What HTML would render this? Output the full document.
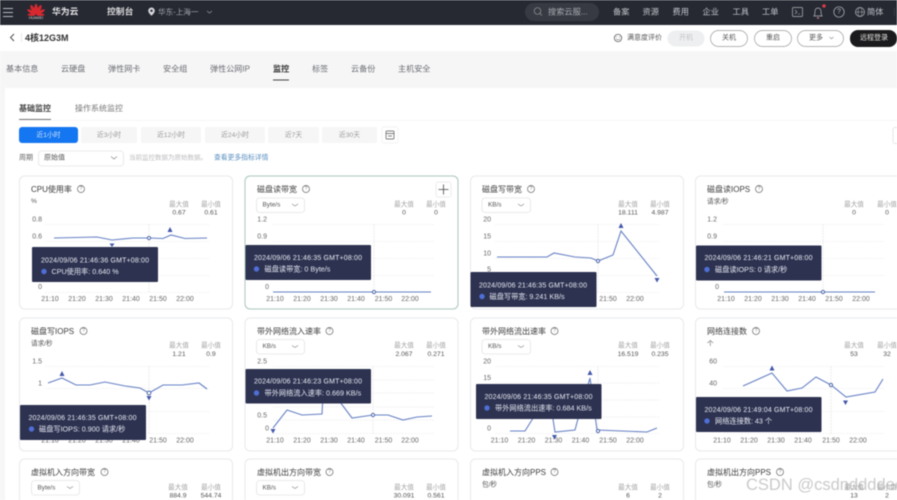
<!DOCTYPE html>
<html lang="zh-CN">
<head>
<meta charset="utf-8">
<title>4核12G3M 监控</title>
<style>
html,body{margin:0;padding:0;background:#fff;width:897px;height:500px;overflow:hidden}
svg{display:block;filter:blur(.5px)}
text{font-family:"Liberation Sans","Noto Sans CJK SC",sans-serif;dominant-baseline:central;white-space:pre}
.m{font-size:8.1px;fill:#6b6d72}
.s{font-size:8px;fill:#777}
.c{fill:#fff;stroke:#e8e9eb;stroke-width:1}
.ti{font-size:8px;fill:#3c3c3c}
.u{font-size:6.6px;fill:#555}
.l{font-size:6.6px;fill:#a4a4a4;text-anchor:middle}
.v{font-size:6.8px;fill:#555;text-anchor:middle}
.y{font-size:7px;fill:#666;text-anchor:end}
.x{font-size:7px;fill:#666;text-anchor:middle}
.g{stroke:#efefef;stroke-width:.8;stroke-dasharray:2 1;fill:none}
.vl{stroke:#e6e6e6;stroke-width:.7;stroke-dasharray:2 1;fill:none}
.p{fill:none;stroke:#6680c4;stroke-width:1.1}
.d{fill:#fff;stroke:#4f68aa;stroke-width:1}
.k{fill:#4257ab}
.tb{fill:#2d3250}
.t1{font-size:7px;fill:#eceef5}
.t2{font-size:7.2px;fill:#e6e8f1}
.dot{fill:#4f6fd6}
.h{fill:none;stroke:#666;stroke-width:.7}
.sel{fill:#fff;stroke:#e4e4e4;stroke-width:.8}
.st{font-size:6.4px;fill:#555}
.ch{fill:none;stroke:#888;stroke-width:.7}
.nav{font-size:8.2px;fill:#c2c4c9}
.b{fill:#fff;stroke:#9a9a9a;stroke-width:.7}
.bt{font-size:7px;fill:#555;text-anchor:middle}
.r{fill:#f6f6f7}
.rt{font-size:6.8px;fill:#999;text-anchor:middle}
</style>
</head>
<body>
<svg width="897" height="500" viewBox="0 0 897 500" xmlns="http://www.w3.org/2000/svg">
<rect width="897" height="500" fill="#fff"/>
<!-- top bar -->
<rect width="897" height="25" fill="#262932"/>
<path d="M3 8.500h10M3 12.500h10M3 16.500h10" stroke="#b8bac0" stroke-width="1"/>
<g fill="#d8282f">
<ellipse cx="36" cy="9" rx="1.700" ry="5.200"/>
<ellipse cx="36" cy="9" rx="1.700" ry="5.200" transform="rotate(-28 36 15)"/>
<ellipse cx="36" cy="9" rx="1.700" ry="5.200" transform="rotate(28 36 15)"/>
<ellipse cx="36" cy="9.500" rx="1.500" ry="4.800" transform="rotate(-58 36 15)"/>
<ellipse cx="36" cy="9.500" rx="1.500" ry="4.800" transform="rotate(58 36 15)"/>
<ellipse cx="36" cy="10.500" rx="1.200" ry="4" transform="rotate(-88 36 15)"/>
<ellipse cx="36" cy="10.500" rx="1.200" ry="4" transform="rotate(88 36 15)"/>
</g>
<text x="36" y="18" text-anchor="middle" style="font-size:3.600px;fill:#ddd">HUAWEI</text>
<text x="52" y="11.500" style="font-size:8.800px;fill:#e6e6e8;font-weight:bold">华为云</text>
<text x="107" y="11.500" style="font-size:8.800px;fill:#d8d9dc;font-weight:bold">控制台</text>
<path d="M151.500 7.500a3.300 3.300 0 0 1 3.300 3.300c0 2.200-3.300 5-3.300 5s-3.300-2.800-3.300-5a3.300 3.300 0 0 1 3.300-3.300z" fill="#d5d6da"/>
<circle cx="151.500" cy="10.800" r="1.200" fill="#262932"/>
<text x="158" y="12" class="nav" style="font-size:7.600px;fill:#a6a8ae">华东-上海一</text>
<path d="M207 11l2.500 2 2.500-2" fill="none" stroke="#999" stroke-width=".7"/>
<rect x="525" y="3" width="74" height="18" rx="9" fill="#373a43"/>
<circle cx="537.500" cy="11" r="3.300" fill="none" stroke="#999" stroke-width=".7"/><path d="M540 13.500l2 2" stroke="#999" stroke-width=".7"/>
<text x="548" y="12" style="font-size:8.200px;fill:#a9abb1">搜索云服...</text>
<text x="613" y="12" class="nav">备案</text>
<text x="642.500" y="12" class="nav">资源</text>
<text x="672.500" y="12" class="nav">费用</text>
<text x="702.500" y="12" class="nav">企业</text>
<text x="732.500" y="12" class="nav">工具</text>
<text x="762" y="12" class="nav">工单</text>
<rect x="792.500" y="7.500" width="10" height="9" rx="1" fill="none" stroke="#b5b7bc" stroke-width=".7"/>
<path d="M795 10l2 2-2 2M798 14h2" fill="none" stroke="#b5b7bc" stroke-width=".6"/>
<path d="M814 16c1-1 1-3 1-5a3 3 0 0 1 6 0c0 2 0 4 1 5zM817 18h2" fill="none" stroke="#b5b7bc" stroke-width=".7"/>
<circle cx="818" cy="18" r=".9" fill="#c78"/>
<circle cx="824" cy="6" r="1.700" fill="#e0394a"/>
<circle cx="839" cy="12" r="5.200" fill="none" stroke="#b5b7bc" stroke-width=".7"/>
<text x="839" y="12" text-anchor="middle" style="font-size:7px;fill:#b5b7bc">?</text>
<circle cx="860" cy="12" r="4.500" fill="none" stroke="#b5b7bc" stroke-width=".7"/>
<ellipse cx="860" cy="12" rx="2" ry="4.500" fill="none" stroke="#b5b7bc" stroke-width=".5"/>
<path d="M855.500 12h9" stroke="#b5b7bc" stroke-width=".5"/>
<text x="867" y="12" class="nav">简体</text>
<path d="M894.500 8v8" stroke="#44464e" stroke-width=".7"/>
<!-- sub header -->
<rect y="25" width="897" height="26" fill="#fff"/>
<path d="M14 34l-3.500 3.500 3.500 3.500" fill="none" stroke="#444" stroke-width=".9"/>
<path d="M21.500 33v9" stroke="#ddd" stroke-width=".7"/>
<text x="25" y="38" style="font-size:9px;font-weight:bold;fill:#333">4核12G3M</text>
<circle cx="618" cy="38" r="3.700" fill="none" stroke="#444" stroke-width=".7"/>
<path d="M616 39c.8 1 3.200 1 4 0M616 37h1M619 37h1" fill="none" stroke="#444" stroke-width=".6"/>
<text x="627" y="38" style="font-size:7px;fill:#555">满意度评价</text>
<rect x="667.500" y="30.500" width="37" height="16" rx="8" fill="#eeeff0"/>
<text x="686" y="38" class="bt" style="fill:#c4c4c6">开机</text>
<rect x="710.500" y="30.500" width="37" height="16" rx="8" class="b"/>
<text x="729" y="38" class="bt">关机</text>
<rect x="754.500" y="30.500" width="37" height="16" rx="8" class="b"/>
<text x="773" y="38" class="bt">重启</text>
<rect x="797.500" y="30.500" width="46" height="16" rx="8" class="b"/>
<text x="816" y="38" class="bt">更多</text>
<path d="M829.500 37l2 1.800 2-1.800" fill="none" stroke="#888" stroke-width=".6"/>
<rect x="850" y="30" width="47" height="17" rx="8" fill="#1b1b1d"/>
<text x="874" y="38" class="bt" style="fill:#e6e6e6">远程登录</text>
<!-- tabs band -->
<rect y="51" width="897" height="37" fill="#f6f6f7"/>
<rect y="88" width="5" height="412" fill="#f6f6f7"/>
<rect x="5" y="88" width="892" height="412" rx="4" fill="#fff"/>
<text x="6" y="69" class="m">基本信息</text>
<text x="61" y="69" class="m">云硬盘</text>
<text x="108" y="69" class="m">弹性网卡</text>
<text x="163" y="69" class="m">安全组</text>
<text x="210" y="69" class="m">弹性公网IP</text>
<text x="273" y="69" class="m" style="fill:#333;font-weight:bold">监控</text>
<rect x="273" y="79.500" width="16" height="1" fill="#444"/>
<text x="312" y="69" class="m">标签</text>
<text x="351" y="69" class="m">云备份</text>
<text x="398" y="69" class="m">主机安全</text>
<!-- sub tabs -->
<text x="19" y="108.500" class="s" style="fill:#444;font-weight:bold">基础监控</text>
<rect x="19" y="119" width="32" height=".8" fill="#555"/>
<text x="75" y="108.500" class="s">操作系统监控</text>
<rect x="19" y="120" width="878" height=".6" fill="#f2f2f3"/>
<!-- range -->
<rect x="19" y="127" width="59" height="16" rx="3" fill="#1476f0"/>
<text x="48.500" y="135.500" class="rt" style="fill:#cfe3ff">近1小时</text>
<rect x="81" y="127" width="56" height="16" rx="2" class="r"/><text x="109" y="135.500" class="rt">近3小时</text>
<rect x="141" y="127" width="60" height="16" rx="2" class="r"/><text x="171" y="135.500" class="rt">近12小时</text>
<rect x="205" y="127" width="60" height="16" rx="2" class="r"/><text x="235" y="135.500" class="rt">近24小时</text>
<rect x="268" y="127" width="51" height="16" rx="2" class="r"/><text x="293.500" y="135.500" class="rt">近7天</text>
<rect x="322" y="127" width="55" height="16" rx="2" class="r"/><text x="349.500" y="135.500" class="rt">近30天</text>
<rect x="382" y="127" width="16" height="16" rx="2" fill="#fff" stroke="#eee" stroke-width=".7"/>
<rect x="386" y="131" width="8" height="8" rx="1" fill="none" stroke="#555" stroke-width=".7"/>
<path d="M386 133.500h8M388 136h4" stroke="#555" stroke-width=".7"/>
<rect x="893" y="127.500" width="10" height="16" rx="2" fill="#fff" stroke="#ddd" stroke-width=".7"/>
<text x="19" y="158" style="font-size:7px;fill:#666">周期</text>
<rect x="38.500" y="151" width="85" height="15" rx="3" class="sel"/>
<text x="44" y="158" class="st" style="font-size:7px">原始值</text>
<path d="M111 156.500l3 2.500 3-2.500" class="ch"/>
<text x="129" y="158" style="font-size:6.500px;fill:#bcbcc0">当前监控数据为原始数据。</text>
<text x="214" y="158" style="font-size:6.800px;fill:#5a8fc0">查看更多指标详情</text>

<!-- watermark under cards' text -->
<!-- CARD 1 -->
<rect x="19.500" y="176" width="213" height="133" rx="5" class="c"/>
<text x="31" y="189.500" class="ti">CPU使用率</text>
<circle cx="81" cy="189" r="3.500" class="h"/><text x="81" y="189" text-anchor="middle" style="font-size:5px;fill:#777">?</text>
<text x="31" y="201.500" class="u">%</text>
<text x="179" y="205" class="l">最大值</text><text x="179" y="213" class="v">0.67</text>
<text x="211" y="205" class="l">最小值</text><text x="211" y="213" class="v">0.61</text>
<path d="M45 224.500h165M45 241.500h165M45 258.500h165M45 275.500h165M45 292.500h165" class="g"/>
<path d="M149 224v68" class="vl"/>
<text x="42" y="220" class="y">0.8</text><text x="42" y="237" class="y">0.6</text><text x="42" y="287.500" class="y">0</text>
<text x="50" y="299.500" class="x">21:10</text><text x="77" y="299.500" class="x">21:20</text><text x="104" y="299.500" class="x">21:30</text><text x="131" y="299.500" class="x">21:40</text><text x="158" y="299.500" class="x">21:50</text><text x="185" y="299.500" class="x">22:00</text>
<polyline class="p" points="54,238 97,237 112,240 133,238 149,238 163,238.500 171,235 185,238.500 207,238"/>
<circle cx="149" cy="238" r="1.600" class="d"/>
<path d="M109.500 243.500h5l-2.500 3.500z" class="k"/><path d="M167.500 232h5l-2.500-5z" class="k"/>
<rect x="32" y="247" width="126" height="35" rx="1" class="tb"/>
<text x="41" y="261" class="t1" textLength="108">2024/09/06 21:46:36 GMT+08:00</text>
<circle cx="44" cy="271.500" r="2.700" class="dot"/>
<text x="51.500" y="271.500" class="t2">CPU使用率: 0.640 %</text>

<!-- CARD 2 -->
<rect x="245" y="176" width="213" height="133" rx="5" fill="#fff" stroke="#a9c6bd" stroke-width="1"/>
<text x="257" y="189.500" class="ti">磁盘读带宽</text>
<circle cx="306" cy="189" r="3.500" class="h"/><text x="306" y="189" text-anchor="middle" style="font-size:5px;fill:#777">?</text>
<rect x="436" y="182" width="15" height="15" rx="2" fill="#fff" stroke="#e6e6e6" stroke-width=".7"/>
<path d="M443.500 184.500v10M438.500 189.500h10" stroke="#444" stroke-width=".8"/>
<rect x="256.500" y="198" width="48" height="14.500" rx="3" class="sel"/>
<text x="262.500" y="205" class="st">Byte/s</text><path d="M292 204l3 2 3-2" class="ch"/>
<text x="404" y="205" class="l">最大值</text><text x="404" y="213" class="v">0</text>
<text x="436" y="205" class="l">最小值</text><text x="436" y="213" class="v">0</text>
<path d="M273 224.500h162M273 241.500h162M273 258.500h162M273 275.500h162" class="g"/>
<path d="M374 224v68" class="vl"/>
<text x="267" y="220" class="y">1.2</text><text x="267" y="237" class="y">0.9</text><text x="269" y="287.500" class="y">0</text>
<text x="275" y="299.500" class="x">21:10</text><text x="302" y="299.500" class="x">21:20</text><text x="329" y="299.500" class="x">21:30</text><text x="356" y="299.500" class="x">21:40</text><text x="383.500" y="299.500" class="x">21:50</text><text x="410" y="299.500" class="x">22:00</text>
<polyline class="p" points="273,292 431,292"/>
<circle cx="374" cy="292" r="1.600" class="d"/>
<rect x="245.500" y="245" width="125.500" height="35" rx="1" class="tb"/>
<text x="254" y="258.500" class="t1" textLength="108">2024/09/06 21:46:35 GMT+08:00</text>
<circle cx="256.500" cy="269" r="2.700" class="dot"/>
<text x="264.500" y="269" class="t2">磁盘读带宽: 0 Byte/s</text>

<!-- CARD 3 -->
<rect x="470.500" y="176" width="213" height="133" rx="5" class="c"/>
<text x="482" y="189.500" class="ti">磁盘写带宽</text>
<circle cx="531" cy="189" r="3.500" class="h"/><text x="531" y="189" text-anchor="middle" style="font-size:5px;fill:#777">?</text>
<rect x="482" y="198" width="48.500" height="14.500" rx="3" class="sel"/>
<text x="488" y="205" class="st">KB/s</text><path d="M518 204l3 2 3-2" class="ch"/>
<text x="628" y="205" class="l">最大值</text><text x="628" y="213" class="v">18.111</text>
<text x="660" y="205" class="l">最小值</text><text x="660" y="213" class="v">4.987</text>
<path d="M495 224.500h165M495 241.500h165M495 258.500h165M495 275.500h165M495 292.500h165" class="g"/>
<path d="M598 224v68" class="vl"/>
<text x="491" y="220" class="y">20</text><text x="491" y="237" class="y">15</text><text x="491" y="254" class="y">10</text><text x="491" y="270" class="y">5</text>
<text x="608" y="299.500" class="x">21:50</text><text x="635" y="299.500" class="x">22:00</text>
<polyline class="p" points="497,257 547,257 554,253 575,257 591,258 598,261 613,255 621,231 657,276"/>
<circle cx="598" cy="261" r="1.600" class="d"/>
<path d="M618.500 228h5l-2.500-5z" class="k"/><path d="M654.500 278h5l-2.500 4.500z" class="k"/>
<rect x="470.500" y="272" width="126" height="35" rx="1" class="tb"/>
<text x="479" y="286" class="t1" textLength="108">2024/09/06 21:46:35 GMT+08:00</text>
<circle cx="482" cy="296.500" r="2.700" class="dot"/>
<text x="489.500" y="296.500" class="t2">磁盘写带宽: 9.241 KB/s</text>

<!-- CARD 4 -->
<rect x="695.500" y="176" width="215" height="133" rx="5" class="c"/>
<text x="707" y="189.500" class="ti">磁盘读IOPS</text>
<circle cx="759" cy="189" r="3.500" class="h"/><text x="759" y="189" text-anchor="middle" style="font-size:5px;fill:#777">?</text>
<text x="707" y="202" class="u">请求/秒</text>
<text x="854" y="205" class="l">最大值</text><text x="854" y="213" class="v">0</text>
<text x="887" y="205" class="l">最小值</text><text x="887" y="213" class="v">0</text>
<path d="M723 224.500h162M723 241.500h162M723 258.500h162M723 275.500h162" class="g"/>
<path d="M823 224v68" class="vl"/>
<text x="717" y="220" class="y">1.2</text><text x="717" y="237" class="y">0.9</text><text x="719" y="287.500" class="y">0</text>
<text x="726" y="299.500" class="x">21:10</text><text x="753" y="299.500" class="x">21:20</text><text x="780" y="299.500" class="x">21:30</text><text x="807" y="299.500" class="x">21:40</text><text x="834" y="299.500" class="x">21:50</text><text x="861" y="299.500" class="x">22:00</text>
<polyline class="p" points="724,292 875,292"/>
<circle cx="823" cy="292" r="1.600" class="d"/>
<rect x="696" y="245.500" width="125.500" height="35" rx="1" class="tb"/>
<text x="704.500" y="258.500" class="t1" textLength="108">2024/09/06 21:46:21 GMT+08:00</text>
<circle cx="707" cy="269.500" r="2.700" class="dot"/>
<text x="715" y="269.500" class="t2">磁盘读IOPS: 0 请求/秒</text>

<!-- CARD 5 -->
<rect x="19.500" y="318" width="213" height="133" rx="5" class="c"/>
<text x="31" y="331.500" class="ti">磁盘写IOPS</text>
<circle cx="83.500" cy="331" r="3.500" class="h"/><text x="83.500" y="331" text-anchor="middle" style="font-size:5px;fill:#777">?</text>
<text x="31" y="344" class="u">请求/秒</text>
<text x="179" y="346" class="l">最大值</text><text x="179" y="354.500" class="v">1.21</text>
<text x="211" y="346" class="l">最小值</text><text x="211" y="354.500" class="v">0.9</text>
<path d="M45 366.500h165M45 388.500h165M45 411.500h165M45 433.500h165" class="g"/>
<path d="M149 366v68" class="vl"/>
<text x="42" y="362" class="y">1.5</text><text x="42" y="384" class="y">1</text>
<text x="50" y="441" class="x">21:10</text><text x="77" y="441" class="x">21:20</text><text x="104" y="441" class="x">21:30</text><text x="131" y="441" class="x">21:40</text><text x="158" y="441" class="x">21:50</text><text x="185" y="441" class="x">22:00</text>
<polyline class="p" points="48,383 62,378 76,385 90,385 105,382 125,386 140,388 149,393 163,385 182,385 199,383 207,389"/>
<circle cx="149" cy="393" r="1.900" class="d"/>
<path d="M59.500 376h5l-2.500-5z" class="k"/><path d="M146.500 396h5l-2.500 4.500z" class="k"/>
<rect x="20" y="405" width="126" height="35" rx="1" class="tb"/>
<text x="28.500" y="418.500" class="t1" textLength="108">2024/09/06 21:46:35 GMT+08:00</text>
<circle cx="31.500" cy="429" r="2.700" class="dot"/>
<text x="39" y="429" class="t2">磁盘写IOPS: 0.900 请求/秒</text>

<!-- CARD 6 -->
<rect x="245" y="318" width="213" height="133" rx="5" class="c"/>
<text x="257" y="331.500" class="ti">带外网络流入速率</text>
<circle cx="329.500" cy="331" r="3.500" class="h"/><text x="329.500" y="331" text-anchor="middle" style="font-size:5px;fill:#777">?</text>
<rect x="256.500" y="339.500" width="48" height="14.500" rx="3" class="sel"/>
<text x="262.500" y="346.500" class="st">KB/s</text><path d="M292 345.500l3 2 3-2" class="ch"/>
<text x="404" y="346" class="l">最大值</text><text x="404" y="354.500" class="v">2.067</text>
<text x="436" y="346" class="l">最小值</text><text x="436" y="354.500" class="v">0.271</text>
<path d="M273 366.500h162M273 380h162M273 393h162M273 407h162M273 420h162M273 433.500h162" class="g"/>
<path d="M373 366v68" class="vl"/>
<text x="267" y="362" class="y">2.5</text><text x="267" y="416" class="y">0.5</text><text x="269" y="429" class="y">0</text>
<text x="275" y="441" class="x">21:10</text><text x="302" y="441" class="x">21:20</text><text x="329" y="441" class="x">21:30</text><text x="356" y="441" class="x">21:40</text><text x="383.500" y="441" class="x">21:50</text><text x="410" y="441" class="x">22:00</text>
<polyline class="p" points="273,428 287,410 302,415 322,414 323,395 340,402 352,418 373,415 388,415 403,420 417,417 432,416"/>
<circle cx="373" cy="415" r="1.600" class="d"/>
<path d="M270.500 429h5l-2.500 4.500z" class="k"/>
<rect x="245.500" y="369" width="125.500" height="34.500" rx="1" class="tb"/>
<text x="254" y="382" class="t1" textLength="108">2024/09/06 21:46:23 GMT+08:00</text>
<circle cx="256.500" cy="393" r="2.700" class="dot"/>
<text x="264.500" y="393" class="t2">带外网络流入速率: 0.669 KB/s</text>

<!-- CARD 7 -->
<rect x="470.500" y="318" width="213" height="133" rx="5" class="c"/>
<text x="482" y="331.500" class="ti">带外网络流出速率</text>
<circle cx="554.500" cy="331" r="3.500" class="h"/><text x="554.500" y="331" text-anchor="middle" style="font-size:5px;fill:#777">?</text>
<rect x="482" y="339.500" width="48.500" height="14.500" rx="3" class="sel"/>
<text x="488" y="346.500" class="st">KB/s</text><path d="M518 345.500l3 2 3-2" class="ch"/>
<text x="628" y="346" class="l">最大值</text><text x="628" y="354.500" class="v">16.519</text>
<text x="660" y="346" class="l">最小值</text><text x="660" y="354.500" class="v">0.235</text>
<path d="M495 366.500h165M495 383h165M495 400h165M495 417h165M495 433.500h165" class="g"/>
<path d="M598 366v68" class="vl"/>
<text x="491" y="362" class="y">20</text><text x="491" y="378.500" class="y">15</text><text x="491" y="429" class="y">0</text>
<text x="499.500" y="441" class="x">21:10</text><text x="526.500" y="441" class="x">21:20</text><text x="553.500" y="441" class="x">21:30</text><text x="580.500" y="441" class="x">21:40</text><text x="608" y="441" class="x">21:50</text><text x="635" y="441" class="x">22:00</text>
<polyline class="p" points="510,431 525,431 535,415 550,400 555,432 575,430 579,415 590,378 597,430 647,432 657,428"/>
<circle cx="598" cy="431" r="1.600" class="d"/>
<path d="M587.500 375h5l-2.500-5z" class="k"/><path d="M552 435h5l-2.500 4.500z" class="k"/>
<rect x="476" y="384" width="125.500" height="35" rx="1" class="tb"/>
<text x="484.500" y="397.500" class="t1" textLength="108">2024/09/06 21:46:35 GMT+08:00</text>
<circle cx="487" cy="408" r="2.700" class="dot"/>
<text x="495" y="408" class="t2">带外网络流出速率: 0.684 KB/s</text>

<!-- CARD 8 -->
<rect x="695.500" y="318" width="215" height="133" rx="5" class="c"/>
<text x="707" y="331.500" class="ti">网络连接数</text>
<circle cx="756" cy="331" r="3.500" class="h"/><text x="756" y="331" text-anchor="middle" style="font-size:5px;fill:#777">?</text>
<text x="707" y="344" class="u">个</text>
<text x="854" y="346" class="l">最大值</text><text x="854" y="354.500" class="v">53</text>
<text x="887" y="346" class="l">最小值</text><text x="887" y="354.500" class="v">32</text>
<path d="M723 366.500h162M723 388.500h162M723 411.500h162M723 433.500h162" class="g"/>
<path d="M831 366v68" class="vl"/>
<text x="717" y="362" class="y">60</text><text x="717" y="384" class="y">40</text>
<text x="722" y="441" class="x">21:10</text><text x="749" y="441" class="x">21:20</text><text x="776" y="441" class="x">21:30</text><text x="803" y="441" class="x">21:40</text><text x="831" y="441" class="x">21:50</text><text x="858" y="441" class="x">22:00</text>
<polyline class="p" points="743,386 772,373 787,391 802,388 816,377 831,385 846,397 875,392 883,379"/>
<circle cx="831" cy="385" r="1.600" class="d"/>
<path d="M769.500 370.500h5l-2.500-5z" class="k"/><path d="M843 400.500h5l-2.500 4.500z" class="k"/>
<rect x="696" y="397" width="125.500" height="35" rx="1" class="tb"/>
<text x="704.500" y="410.500" class="t1" textLength="108">2024/09/06 21:49:04 GMT+08:00</text>
<circle cx="707" cy="421" r="2.700" class="dot"/>
<text x="715" y="421" class="t2">网络连接数: 43 个</text>

<!-- ROW 3 -->
<rect x="19.500" y="459" width="213" height="60" rx="5" class="c"/>
<text x="31" y="472.500" class="ti">虚拟机入方向带宽</text>
<circle cx="104.500" cy="472" r="3.500" class="h"/><text x="104.500" y="472" text-anchor="middle" style="font-size:5px;fill:#777">?</text>
<rect x="31.500" y="480.500" width="48" height="14.500" rx="3" class="sel"/>
<text x="37.500" y="488" class="st">Byte/s</text><path d="M67 486.500l3 2 3-2" class="ch"/>
<text x="178" y="488" class="l">最大值</text><text x="178" y="496" class="v">884.9</text>
<text x="211" y="488" class="l">最小值</text><text x="211" y="496" class="v">544.74</text>

<rect x="245" y="459" width="213" height="60" rx="5" class="c"/>
<text x="257" y="472.500" class="ti">虚拟机出方向带宽</text>
<circle cx="329.500" cy="472" r="3.500" class="h"/><text x="329.500" y="472" text-anchor="middle" style="font-size:5px;fill:#777">?</text>
<rect x="256.500" y="480.500" width="48" height="14.500" rx="3" class="sel"/>
<text x="262.500" y="488" class="st">KB/s</text><path d="M292 486.500l3 2 3-2" class="ch"/>
<text x="404" y="488" class="l">最大值</text><text x="404" y="496" class="v">30.091</text>
<text x="436" y="488" class="l">最小值</text><text x="436" y="496" class="v">0.561</text>

<rect x="470.500" y="459" width="213" height="60" rx="5" class="c"/>
<text x="482" y="472.500" class="ti">虚拟机入方向PPS</text>
<circle cx="554.500" cy="472" r="3.500" class="h"/><text x="554.500" y="472" text-anchor="middle" style="font-size:5px;fill:#777">?</text>
<text x="482" y="485" class="u">包/秒</text>
<text x="628" y="488" class="l">最大值</text><text x="628" y="496" class="v">6</text>
<text x="660" y="488" class="l">最小值</text><text x="660" y="496" class="v">2</text>

<rect x="695.500" y="459" width="215" height="60" rx="5" class="c"/>
<text x="707" y="472.500" class="ti">虚拟机出方向PPS</text>
<circle cx="780" cy="472" r="3.500" class="h"/><text x="780" y="472" text-anchor="middle" style="font-size:5px;fill:#777">?</text>
<text x="707" y="485" class="u">包/秒</text>
<text x="854" y="488" class="l">最大值</text><text x="854" y="496" class="v">13</text>
<text x="887" y="488" class="l">最小值</text><text x="887" y="496" class="v">2</text>

<!-- watermark -->
<text x="746" y="485" style="font-size:16.500px;fill:#8a8a8a;fill-opacity:.45">CSDN @csdnddddeck</text>
</svg>
</body>
</html>
